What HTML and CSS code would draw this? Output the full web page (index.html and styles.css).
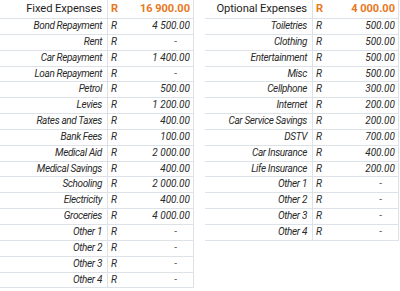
FILE: index.html
```html
<!DOCTYPE html>
<html>
<head>
<meta charset="utf-8">
<link rel="stylesheet" href="styles.css">
</head>
<body>
<div class="sheet">
  <div class="block">
    <div class="row head"><span class="label">Fixed Expenses</span><span class="cur">R</span><span class="amt">16 900.00</span></div>
    <div class="row"><span class="label">Bond Repayment</span><span class="cur">R</span><span class="amt">4 500.00</span></div>
    <div class="row"><span class="label">Rent</span><span class="cur">R</span><span class="amt dash">-</span></div>
    <div class="row"><span class="label">Car Repayment</span><span class="cur">R</span><span class="amt">1 400.00</span></div>
    <div class="row"><span class="label">Loan Repayment</span><span class="cur">R</span><span class="amt dash">-</span></div>
    <div class="row"><span class="label">Petrol</span><span class="cur">R</span><span class="amt">500.00</span></div>
    <div class="row"><span class="label">Levies</span><span class="cur">R</span><span class="amt">1 200.00</span></div>
    <div class="row"><span class="label">Rates and Taxes</span><span class="cur">R</span><span class="amt">400.00</span></div>
    <div class="row"><span class="label">Bank Fees</span><span class="cur">R</span><span class="amt">100.00</span></div>
    <div class="row"><span class="label">Medical Aid</span><span class="cur">R</span><span class="amt">2 000.00</span></div>
    <div class="row"><span class="label">Medical Savings</span><span class="cur">R</span><span class="amt">400.00</span></div>
    <div class="row"><span class="label">Schooling</span><span class="cur">R</span><span class="amt">2 000.00</span></div>
    <div class="row"><span class="label">Electricity</span><span class="cur">R</span><span class="amt">400.00</span></div>
    <div class="row"><span class="label">Groceries</span><span class="cur">R</span><span class="amt">4 000.00</span></div>
    <div class="row"><span class="label">Other 1</span><span class="cur">R</span><span class="amt dash">-</span></div>
    <div class="row"><span class="label">Other 2</span><span class="cur">R</span><span class="amt dash">-</span></div>
    <div class="row"><span class="label">Other 3</span><span class="cur">R</span><span class="amt dash">-</span></div>
    <div class="row"><span class="label">Other 4</span><span class="cur">R</span><span class="amt dash">-</span></div>
  </div>
  <div class="block">
    <div class="row head"><span class="label">Optional Expenses</span><span class="cur">R</span><span class="amt">4 000.00</span></div>
    <div class="row"><span class="label">Toiletries</span><span class="cur">R</span><span class="amt">500.00</span></div>
    <div class="row"><span class="label">Clothing</span><span class="cur">R</span><span class="amt">500.00</span></div>
    <div class="row"><span class="label">Entertainment</span><span class="cur">R</span><span class="amt">500.00</span></div>
    <div class="row"><span class="label">Misc</span><span class="cur">R</span><span class="amt">500.00</span></div>
    <div class="row"><span class="label">Cellphone</span><span class="cur">R</span><span class="amt">300.00</span></div>
    <div class="row"><span class="label">Internet</span><span class="cur">R</span><span class="amt">200.00</span></div>
    <div class="row"><span class="label">Car Service Savings</span><span class="cur">R</span><span class="amt">200.00</span></div>
    <div class="row"><span class="label">DSTV</span><span class="cur">R</span><span class="amt">700.00</span></div>
    <div class="row"><span class="label">Car Insurance</span><span class="cur">R</span><span class="amt">400.00</span></div>
    <div class="row"><span class="label">Life Insurance</span><span class="cur">R</span><span class="amt">200.00</span></div>
    <div class="row"><span class="label">Other 1</span><span class="cur">R</span><span class="amt dash">-</span></div>
    <div class="row"><span class="label">Other 2</span><span class="cur">R</span><span class="amt dash">-</span></div>
    <div class="row"><span class="label">Other 3</span><span class="cur">R</span><span class="amt dash">-</span></div>
    <div class="row"><span class="label">Other 4</span><span class="cur">R</span><span class="amt dash">-</span></div>
  </div>
</div>
</body>
</html>
```
FILE: styles.css
```css
html, body {
  margin: 0;
  padding: 0;
  background: #ffffff;
}
body {
  font-family: Roboto, "Open Sans", "Liberation Sans", sans-serif;
  color: #2a2a2a;
  width: 400px;
  height: 291px;
  overflow: hidden;
}
.sheet {
  display: flex;
  align-items: flex-start;
  gap: 11px;
}
.block {
  width: 194px;
  box-sizing: border-box;
  border-right: 1px solid #dde1e8;
  display: flex;
  flex-direction: column;
}
.row {
  display: grid;
  grid-template-columns: 108px 1fr auto;
  height: 15.85px;
  box-sizing: border-box;
  border-bottom: 1px solid #dde1e8;
  font-size: 10px;
  font-style: italic;
  line-height: 14px;
}
.row.head {
  height: 19px;
  font-size: 11.2px;
  font-style: normal;
  line-height: 18px;
  color: #1e1e1e;
}
.label {
  box-sizing: border-box;
  border-right: 1px solid #dde1e8;
  text-align: right;
  padding-right: 5px;
  white-space: nowrap;
  margin-bottom: -1px;
  letter-spacing: -0.35px;
}
.head .label {
  letter-spacing: -0.1px;
}
.cur {
  padding-left: 3px;
}
.amt {
  text-align: right;
  padding-right: 3px;
}
.amt.dash {
  padding-right: 16px;
  font-style: normal;
  color: #555;
}
.head .cur,
.head .amt {
  color: #e8781c;
  font-weight: bold;
  font-size: 11px;
}
```
